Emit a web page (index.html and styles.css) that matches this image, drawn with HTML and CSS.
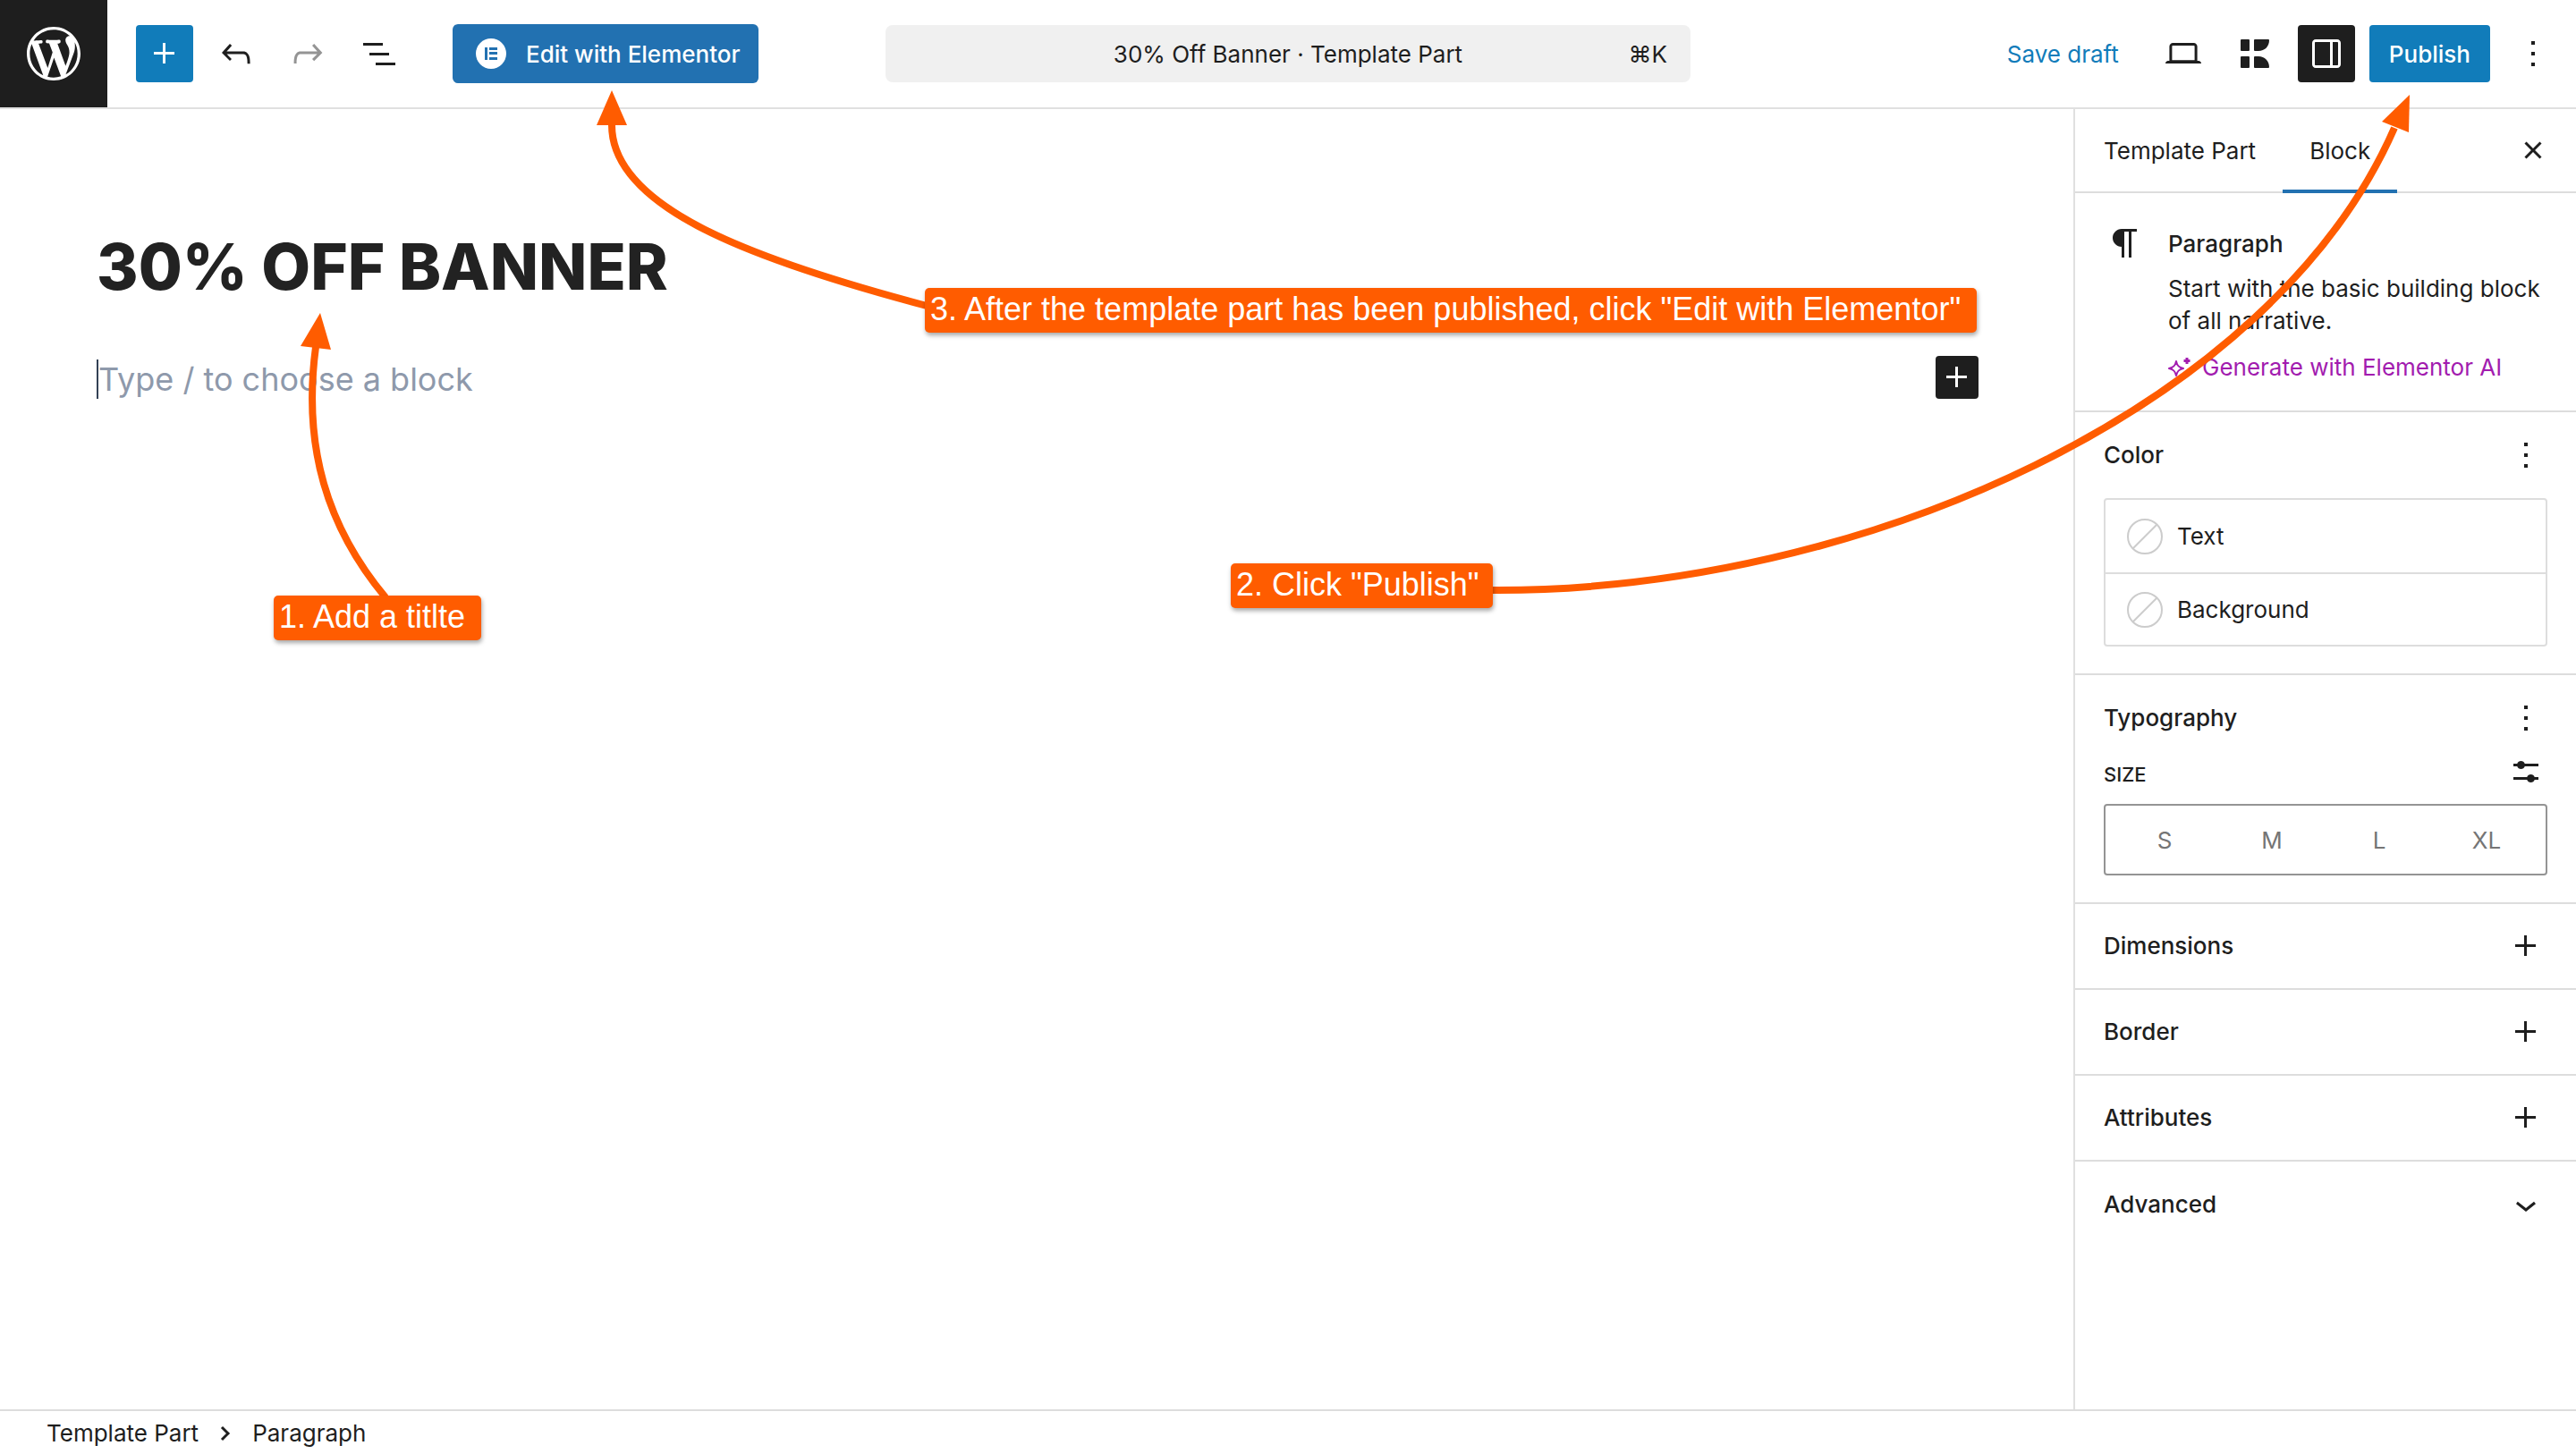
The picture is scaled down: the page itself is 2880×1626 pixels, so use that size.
FILE: index.html
```html
<!DOCTYPE html>
<html lang="en">
<head>
<meta charset="utf-8">
<title>30% Off Banner · Template Part</title>
<link rel="stylesheet" href="styles.css">
</head>
<body>
<svg class="sprite" aria-hidden="true">
  <symbol id="plus" viewBox="0 0 24 24"><path d="M11 12.5V17.5H12.5V12.5H17.5V11H12.5V6H11V11H6V12.5H11Z"/></symbol>
  <symbol id="more" viewBox="0 0 24 24"><path d="M13 19h-2v-2h2v2zm0-6h-2v-2h2v2zm0-6h-2V5h2v2z"/></symbol>
</svg>
<div class="editor">
  <header class="header">
    <div class="tools">
      <a class="site-logo" href="#" aria-label="View templates">
        <svg viewBox="-2 -2 24 24"><path d="M20 10c0-5.51-4.49-10-10-10C4.48 0 0 4.49 0 10c0 5.52 4.48 10 10 10 5.51 0 10-4.48 10-10zM7.78 15.37L4.37 6.22c.55-.02 1.17-.08 1.17-.08.5-.06.44-1.13-.06-1.11 0 0-1.45.11-2.37.11-.18 0-.37 0-.58-.01C4.12 2.69 6.87 1.11 10 1.11c2.33 0 4.45.87 6.05 2.34-.68-.11-1.65.39-1.65 1.58 0 .74.45 1.36.9 2.1.35.61.55 1.36.55 2.46 0 1.49-1.4 5-1.4 5l-3.03-8.37c.54-.02.82-.17.82-.17.5-.05.44-1.25-.06-1.22 0 0-1.44.12-2.38.12-.87 0-2.33-.12-2.33-.12-.5-.03-.56 1.2-.06 1.22l.92.08 1.26 3.41zM17.41 10c.24-.64.74-1.87.43-4.25.7 1.29 1.05 2.71 1.05 4.25 0 3.29-1.73 6.24-4.4 7.78.97-2.59 1.94-5.2 2.92-7.78zM6.1 18.09C3.12 16.65 1.11 13.53 1.11 10c0-1.3.23-2.48.72-3.59C3.25 10.3 4.67 14.2 6.1 18.09zm4.03-6.63l2.58 6.98c-.86.29-1.76.45-2.71.45-.79 0-1.57-.11-2.29-.33.81-2.38 1.62-4.74 2.42-7.1z"/></svg>
      </a>
      <button class="icon-button primary" aria-label="Toggle block inserter"><svg class="icon"><use href="#plus"/></svg></button>
      <button class="icon-button" aria-label="Undo"><svg class="icon" viewBox="0 0 24 24"><path d="M18.3 11.7c-.6-.6-1.4-.9-2.3-.9H6.7l2.9-3.3-1.1-1-4.5 5L8.5 16l1-1-2.7-2.7H16c.5 0 .9.2 1.3.5 1 1 1 3.4 1 4.5v.3h1.5v-.2c0-1.5 0-4.3-1.5-5.7z"/></svg></button>
      <button class="icon-button" aria-label="Redo" disabled><svg class="icon" viewBox="0 0 24 24"><path d="M15.6 6.5l-1.1 1 2.9 3.3H8c-.9 0-1.7.3-2.3.9-1.4 1.5-1.4 4.2-1.4 5.6v.2h1.5v-.3c0-1.1 0-3.5 1-4.5.3-.3.7-.5 1.3-.5h9.2L14.5 15l1.1 1.1 4.6-4.6-4.6-5z"/></svg></button>
      <button class="icon-button" aria-label="Document overview"><svg class="icon" viewBox="0 0 24 24"><path d="M3 6h11v1.5H3V6Zm3.5 5.5h11V13h-11v-1.5ZM21 17H10v1.5h11V17Z"/></svg></button>
      <button class="elementor-button">
        <svg class="elementor-logo" viewBox="0 0 34 34"><circle cx="17" cy="17" r="17" fill="#fff"/><path fill="#2271b1" d="M10 10h3v14h-3zM15 10h9v3h-9zM15 15h9v3h-9zM15 21h9v3h-9z"/></svg>
        <span class="button-text">Edit with Elementor</span>
      </button>
    </div>
    <button class="command-bar"><span class="command-title">30% Off Banner · Template Part</span><span class="shortcut">⌘K</span></button>
    <div class="actions">
      <button class="save-draft"><span class="button-text">Save draft</span></button>
      <button class="icon-button" aria-label="View"><svg class="icon" viewBox="0 0 24 24"><path d="M20.5 16h-.7V8c0-1.1-.9-2-2-2H6.2c-1.1 0-2 .9-2 2v8h-.7c-.8 0-1.5.7-1.5 1.5h20c0-.8-.7-1.5-1.5-1.5zM5.7 8c0-.3.2-.5.5-.5h11.6c.3 0 .5.2.5.5v7.6H5.7V8z"/></svg></button>
      <button class="icon-button" aria-label="Kadence blocks"><svg class="icon" viewBox="0 0 48 48"><path d="M9 8h8a1 1 0 0 1 1 1v11a1 1 0 0 1-1 1H9a1 1 0 0 1-1-1V9a1 1 0 0 1 1-1zM9 27h8a1 1 0 0 1 1 1v11a1 1 0 0 1-1 1H9a1 1 0 0 1-1-1V28a1 1 0 0 1 1-1zM24 8h15a1 1 0 0 1 1 1c0 7-5 12-12 12h-4a1 1 0 0 1-1-1V9a1 1 0 0 1 1-1zM24 27h4c7 0 12 5 12 12a1 1 0 0 1-1 1H24a1 1 0 0 1-1-1V28a1 1 0 0 1 1-1z"/></svg></button>
      <button class="icon-button pressed" aria-label="Settings" aria-pressed="true"><svg class="icon" viewBox="0 0 24 24"><path fill-rule="evenodd" d="M18 4H6c-1.1 0-2 .9-2 2v12c0 1.1.9 2 2 2h12c1.1 0 2-.9 2-2V6c0-1.1-.9-2-2-2zm-4 14.5H6c-.3 0-.5-.2-.5-.5V6c0-.3.2-.5.5-.5h8v13zm4.5-.5c0 .3-.2.5-.5.5h-2.500v-13H18c.3 0 .5.2.5.5v12z"/></svg></button>
      <button class="publish"><span class="button-text">Publish</span></button>
      <button class="icon-button" aria-label="Options"><svg class="icon"><use href="#more"/></svg></button>
    </div>
  </header>

  <div class="body">
    <main class="canvas">
      <h1 class="post-title">30% OFF BANNER</h1>
      <div class="block-row">
        <p class="placeholder">Type / to choose a block</p>
        <button class="block-adder" aria-label="Add block"><svg class="icon"><use href="#plus"/></svg></button>
      </div>
    </main>

    <aside class="sidebar">
      <div class="tabs" role="tablist">
        <button class="tab" role="tab">Template Part</button>
        <button class="tab active" role="tab" aria-selected="true">Block</button>
        <button class="icon-button close" aria-label="Close settings"><svg class="icon" viewBox="0 0 24 24"><path d="m12 13.060 3.712 3.713 1.061-1.06L13.061 12l3.712-3.712-1.06-1.06L12 10.938 8.288 7.227l-1.061 1.06L10.939 12l-3.712 3.712 1.06 1.061L12 13.061Z"/></svg></button>
      </div>

      <section class="block-card">
        <svg class="icon" viewBox="0 0 24 24"><path d="m9.996 14v-.225l.004 0v6.225h1.500v-14.500h2.500v14.500h1.500v-14.500h3v-1.500h-8.504c-2.761 0-5 2.239-5 5 0 2.761 2.239 5 5 5z"/></svg>
        <div class="card-text">
          <h2>Paragraph</h2>
          <p>Start with the basic building block of all narrative.</p>
          <a class="ai-link" href="#"><svg class="ai-icon" viewBox="0 0 26 26"><path fill="none" stroke="currentColor" stroke-width="2" stroke-linejoin="round" d="M9 6c1 5 3 7 8 8-5 1-7 3-8 8-1-5-3-7-8-8 5-1 7-3 8-8z"/><path stroke="currentColor" stroke-width="3" d="M21 2v7M17.500 5.500h7"/></svg>Generate with Elementor AI</a>
        </div>
      </section>

      <section class="panel">
        <div class="panel-head"><h2>Color</h2><button class="icon-button small" aria-label="Color options"><svg class="icon"><use href="#more"/></svg></button></div>
        <div class="color-list">
          <button class="color-row"><svg class="swatch" viewBox="0 0 40 40"><circle cx="20" cy="20" r="19"/><path d="M6.500 33.500 33.500 6.500"/></svg>Text</button>
          <button class="color-row"><svg class="swatch" viewBox="0 0 40 40"><circle cx="20" cy="20" r="19"/><path d="M6.500 33.500 33.500 6.500"/></svg>Background</button>
        </div>
      </section>

      <section class="panel">
        <div class="panel-head"><h2>Typography</h2><button class="icon-button small" aria-label="Typography options"><svg class="icon"><use href="#more"/></svg></button></div>
        <div class="size-head"><span class="size-label" id="size-label">SIZE</span><button class="icon-button small" aria-label="Set custom size"><svg class="icon" viewBox="0 0 24 24"><path d="m19 7.500h-7.628c-.309-.874-1.142-1.500-2.122-1.500-.98 0-1.813.626-2.122 1.500h-2.128v1.500h2.128c.309.874 1.142 1.500 2.122 1.500.98 0 1.813-.626 2.122-1.500h7.628zM19 15h-2.128c-.309-.874-1.142-1.500-2.122-1.500s-1.813.626-2.122 1.500h-7.628v1.500h7.628c.309.874 1.142 1.500 2.122 1.500s1.813-.626 2.122-1.500h2.128z"/></svg></button></div>
        <div class="sizes" role="radiogroup" aria-labelledby="size-label">
          <label><input type="radio" name="size">S</label>
          <label><input type="radio" name="size">M</label>
          <label><input type="radio" name="size">L</label>
          <label><input type="radio" name="size">XL</label>
        </div>
      </section>

      <button class="toggle-panel">Dimensions<svg class="icon"><use href="#plus"/></svg></button>
      <button class="toggle-panel">Border<svg class="icon"><use href="#plus"/></svg></button>
      <button class="toggle-panel">Attributes<svg class="icon"><use href="#plus"/></svg></button>
      <button class="toggle-panel">Advanced<svg class="icon" viewBox="0 0 24 24"><path d="M17.500 11.600L12 16l-5.500-4.400.9-1.200L12 14l4.500-3.600 1 1.200z"/></svg></button>
    </aside>
  </div>

  <footer class="footer">
    <a href="#">Template Part</a>
    <svg class="crumb" viewBox="0 0 12 20"><path d="M2 3l7 7-7 7" fill="none" stroke="#1e1e1e" stroke-width="3"/></svg>
    <a href="#">Paragraph</a>
  </footer>
</div>

<div class="annotations">
  <svg class="arrows" aria-hidden="true">
    <g class="shafts">
      <path d="M431 668C366 590 338 500 353 388"/>
      <path d="M1668 660C2080 662 2540 457 2677 143"/>
      <path d="M1036 342C840 290 684 232 684 140"/>
    </g>
    <g class="heads">
      <path d="M358 350l12 41-34-4z"/>
      <path d="M2694 106l-1 42-30-12z"/>
      <path d="M684 101l17 39h-34z"/>
    </g>
  </svg>
  <div class="note note-title">1. Add a titlte</div>
  <div class="note note-publish">2. Click "Publish"</div>
  <div class="note note-edit">3. After the template part has been published, click "Edit with Elementor"</div>
</div>
</body>
</html>
```
FILE: styles.css
```css
* { box-sizing: border-box; }
body {
  margin: 0;
  background: #fff;
  color: #1e1e1e;
  font-family: Inter, "Noto Sans", sans-serif;
  font-size: 26px;
  line-height: 36px;
}
h1, h2, p { margin: 0; }
h2 { font-size: 26px; font-weight: 500; line-height: 36px; }
a { color: inherit; text-decoration: none; }
button {
  display: flex;
  align-items: center;
  margin: 0;
  padding: 0;
  border: 0;
  background: none;
  color: inherit;
  font: inherit;
  white-space: nowrap;
}
svg { display: block; flex: none; fill: currentColor; }
.sprite { position: absolute; width: 0; height: 0; }
.icon { width: 48px; height: 48px; }

.editor { display: flex; flex-direction: column; min-height: 100vh; }

.header {
  display: grid;
  grid-template-columns: 1fr 900px 1fr;
  align-items: center;
  border-bottom: 2px solid #e0e0e0;
}
.tools, .actions { display: flex; align-items: center; gap: 16px; }
.actions { justify-content: flex-end; padding-right: 16px; }
.site-logo {
  display: flex;
  align-items: center;
  justify-content: center;
  width: 120px;
  height: 120px;
  margin-right: 16px;
  background: #1e1e1e;
  color: #fff;
}
.site-logo svg { width: 72px; height: 72px; }
.icon-button {
  justify-content: center;
  width: 64px;
  height: 64px;
  border-radius: 4px;
}
.icon-button:disabled { color: #949494; }
.icon-button.small { width: 48px; height: 48px; }
.button-text { padding-top: 2px; }
.primary, .publish { background: #117cba; color: #fff; }
.pressed { background: #1e1e1e; color: #fff; }
.elementor-button {
  gap: 22px;
  height: 66px;
  margin-left: 34px;
  padding: 0 20px 0 26px;
  border-radius: 6px;
  background: #2271b1;
  color: #fff;
  font-weight: 500;
}
.elementor-logo { width: 34px; height: 34px; }
.command-bar {
  display: grid;
  grid-template-columns: 1fr auto 1fr;
  height: 64px;
  padding: 2px 26px 0;
  border-radius: 8px;
  background: #f0f0f0;
}
.command-title { grid-column: 2; }
.shortcut { text-align: right; }
.save-draft { padding: 0 24px; color: #117cba; }
.publish { height: 64px; padding: 0 22px; border-radius: 4px; font-weight: 500; }

.body { display: flex; flex: 1; }
.canvas { flex: 1; padding: 124px 106px 0 108px; }
.post-title {
  color: #222;
  font-size: 71px;
  font-weight: 800;
  line-height: 104px;
}
.block-row {
  display: flex;
  align-items: center;
  justify-content: space-between;
  margin-top: 48px;
}
.placeholder {
  margin-top: 4px;
  border-left: 2px solid #334155;
  color: #8e99ab;
  font-size: 36px;
  line-height: 44px;
}
.block-adder { border-radius: 4px; background: #1e1e1e; color: #fff; }

.sidebar { width: 562px; border-left: 2px solid #e0e0e0; }
.tabs { display: flex; height: 94px; padding-left: 2px; border-bottom: 2px solid #ddd; }
.tab { height: 94px; padding: 0 30px; border-bottom: 4px solid transparent; border-top: 4px solid transparent; }
.tab.active { border-bottom-color: #2271b1; }
.close { align-self: center; margin-left: auto; margin-right: 16px; }

.block-card {
  display: flex;
  gap: 24px;
  padding: 32px 24px 30px 32px;
  border-bottom: 2px solid #ddd;
}
.card-text { display: flex; flex-direction: column; padding-top: 7px; }
.card-text p { margin-top: 14px; }
.ai-link { display: flex; align-items: center; gap: 12px; margin-top: 16px; color: #a21caf; }
.ai-icon { width: 26px; height: 26px; }

.panel { padding: 24px 32px 30px; border-bottom: 2px solid #ddd; }
.panel-head, .size-head { display: flex; align-items: center; justify-content: space-between; }
.color-list { margin-top: 24px; border: 2px solid #ddd; border-radius: 4px; }
.color-row { gap: 16px; width: 100%; height: 81px; padding: 0 24px; }
.color-row + .color-row { border-top: 2px solid #ddd; }
.swatch { width: 40px; height: 40px; fill: none; stroke: #ccc; stroke-width: 2; }
.size-head { margin-top: 12px; font-size: 22px; font-weight: 500; }
.size-label { padding-top: 6px; }
.sizes {
  display: grid;
  grid-template-columns: repeat(4, 1fr);
  height: 80px;
  margin-top: 12px;
  padding: 2px 6px 0;
  border: 2px solid #949494;
  border-radius: 4px;
  color: #757575;
}
.sizes label { display: flex; align-items: center; justify-content: center; }
.sizes input { position: absolute; appearance: none; margin: 0; }
.toggle-panel {
  justify-content: space-between;
  width: 100%;
  height: 96px;
  padding: 0 32px;
  border-bottom: 2px solid #ddd;
  font-weight: 500;
}
.toggle-panel:last-child { border-bottom: 0; }

.footer {
  display: flex;
  align-items: center;
  height: 50px;
  padding: 2px 0 0 52px;
  border-top: 2px solid #ddd;
}
.crumb { width: 12px; height: 20px; margin: 0 24px; }

/* Tutorial callouts drawn over the editor */
.annotations { position: absolute; top: 0; left: 0; pointer-events: none; }
.arrows { width: 1px; height: 1px; overflow: visible; }
.shafts { fill: none; stroke: #ff5c00; stroke-width: 8; }
.heads { fill: #ff5c00; }
.note {
  position: absolute;
  height: 50px;
  padding-left: 6px;
  border-radius: 5px;
  background: #ff5c00;
  box-shadow: 1px 3px 5px rgba(0, 0, 0, .35);
  color: #fff;
  font-family: "Liberation Sans", Arial, sans-serif;
  font-size: 36px;
  line-height: 48px;
  white-space: nowrap;
}
.note-title { top: 666px; left: 306px; width: 232px; }
.note-publish { top: 630px; left: 1376px; width: 293px; }
.note-edit { top: 322px; left: 1034px; width: 1176px; }
```
